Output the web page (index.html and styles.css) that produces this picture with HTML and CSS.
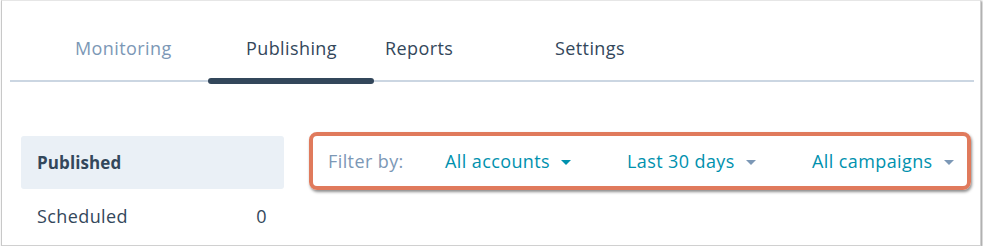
FILE: index.html
```html
<!DOCTYPE html>
<html>
<head>
<meta charset="utf-8">
<link rel="stylesheet" href="styles.css">
</head>
<body>
<div class="frame">
  <nav class="tabs">
    <div class="tab tab-mon muted">Monitoring</div>
    <div class="tab tab-pub active">Publishing</div>
    <div class="tab tab-rep">Reports</div>
    <div class="tab tab-set">Settings</div>
  </nav>
  <div class="content">
    <aside class="side">
      <div class="side-item selected">Published</div>
      <div class="side-item"><span>Scheduled</span><span>0</span></div>
    </aside>
    <div class="filter">
      <span class="filter-label">Filter by:</span>
      <span class="dd dd-accounts">All accounts<span class="caret teal"></span></span>
      <span class="dd dd-days">Last 30 days<span class="caret"></span></span>
      <span class="dd dd-camp">All campaigns<span class="caret"></span></span>
    </div>
  </div>
</div>
</body>
</html>
```

FILE: styles.css
```css
html, body { margin: 0; padding: 0; background: #fff; }
body { font-family: "Open Sans", "Lato", sans-serif; color: #33475b; }
.frame {
  box-sizing: border-box;
  width: 980px;
  height: 246px;
  margin-left: 1px;
  border-top: 1px solid #e6e6e6;
  border-left: 1px solid #c8c8c8;
  border-right: 1px solid #d0d0d0;
  border-bottom: 1px solid #d0d0d0;
  box-shadow: 1px 1px 2px rgba(0,0,0,0.45);
  padding: 0 6px 0 8px;
}
.tabs {
  display: flex;
  height: 79px;
  border-bottom: 2px solid #cbd6e2;
  padding-left: 27px;
  align-items: stretch;
}
.tab {
  box-sizing: border-box;
  font-size: 18px;
  letter-spacing: 0.4px;
  padding: 15px 0 0 38px;
  display: flex;
  align-items: center;
  position: relative;
  white-space: nowrap;
}
.tab-mon { width: 171px; }
.tab-pub { width: 166px; }
.tab-rep { width: 143px; padding-left: 11px; }
.tab-set { width: 120px; }
.tab.muted { color: #7c98b6; }
.tab.active::after {
  content: "";
  position: absolute;
  left: 0; right: 0;
  bottom: -4px;
  height: 6px;
  border-radius: 3px;
  background: #33475b;
}
.content {
  display: flex;
  padding: 54px 0 0 11px;
}
.side { width: 263px; }
.side-item {
  height: 53px;
  display: flex;
  align-items: center;
  justify-content: space-between;
  padding: 0 17px 0 16px;
  font-size: 18px;
  letter-spacing: 0.4px;
}
.side-item.selected {
  background: #eaf0f6;
  border-radius: 3px;
  font-weight: 700;
  font-size: 17px;
  letter-spacing: 0.1px;
}
.filter {
  margin-left: 25px;
  margin-top: -4px;
  box-sizing: border-box;
  width: 662px;
  height: 58px;
  border: 4px solid #e07a5c;
  border-radius: 8px;
  box-shadow: 1px 2px 3px rgba(0,0,0,0.45);
  display: flex;
  align-items: center;
  padding-left: 15px;
  font-size: 18px;
  letter-spacing: 0.4px;
}
.filter-label { color: #7c98b6; width: 117px; }
.dd { color: #0091ae; display: inline-flex; align-items: center; white-space: nowrap; }
.dd-accounts { width: 182px; }
.dd-days { width: 185px; }
.caret {
  display: inline-block;
  width: 0; height: 0;
  border-left: 5px solid transparent;
  border-right: 5px solid transparent;
  border-top: 5px solid #7c98b6;
  margin-left: 11px;
  margin-top: 2px;
}
.caret.teal { border-top-color: #0091ae; }
```
